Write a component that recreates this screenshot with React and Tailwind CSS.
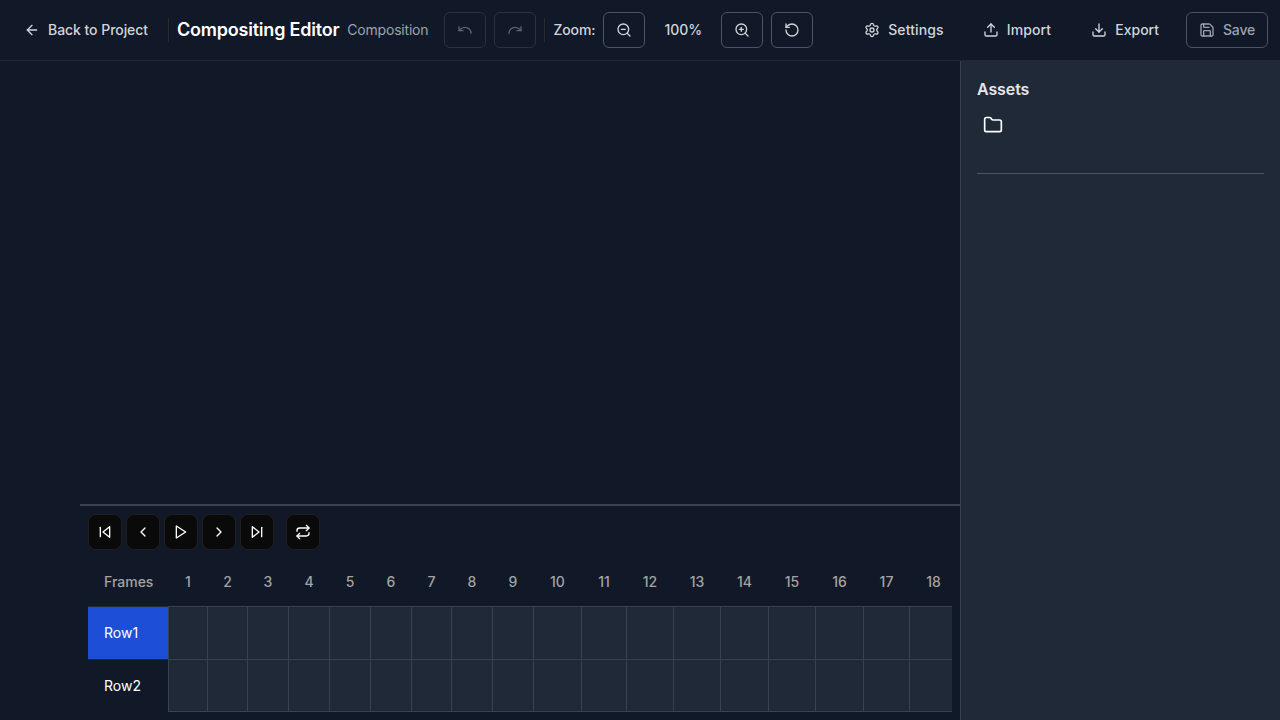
import {
  ArrowLeft,
  Undo,
  Redo,
  ZoomOut,
  ZoomIn,
  RotateCcw,
  Settings,
  Upload,
  Download,
  Save,
  Folder,
  ChevronLeft,
  ChevronRight,
  Repeat,
} from 'lucide-react';

const frames = [1, 2, 3, 4, 5, 6, 7, 8, 9, 10, 11, 12, 13, 14, 15, 16, 17, 18];
const rowClass =
  'grid grid-cols-[80px_39px_40px_41px_41px_41px_41px_40px_41px_41px_48px_45px_47px_47px_48px_47px_48px_46px_43px]';

function SkipBackIcon() {
  return (
    <svg width="16" height="16" viewBox="0 0 24 24" fill="none" stroke="currentColor" strokeWidth="2" strokeLinecap="round" strokeLinejoin="round">
      <polygon points="19 20 9 12 19 4 19 20" />
      <line x1="5" y1="19" x2="5" y2="5" />
    </svg>
  );
}

function SkipForwardIcon() {
  return (
    <svg width="16" height="16" viewBox="0 0 24 24" fill="none" stroke="currentColor" strokeWidth="2" strokeLinecap="round" strokeLinejoin="round">
      <polygon points="5 4 15 12 5 20 5 4" />
      <line x1="19" y1="5" x2="19" y2="19" />
    </svg>
  );
}

function PlayIcon() {
  return (
    <svg width="16" height="16" viewBox="0 0 24 24" fill="none" stroke="currentColor" strokeWidth="2" strokeLinecap="round" strokeLinejoin="round">
      <polygon points="5 3 19 12 5 21 5 3" />
    </svg>
  );
}

function IconButton({ icon: Icon, disabled }) {
  return (
    <button
      className={`flex h-9 w-[42px] items-center justify-center rounded-md border ${
        disabled ? 'border-[#293241] text-[#5b6270]' : 'border-[#4b5563] text-[#d1d5db]'
      }`}
    >
      <Icon size={16} />
    </button>
  );
}

function GhostButton({ icon: Icon, label }) {
  return (
    <button className="flex h-9 items-center gap-2 rounded-md px-4 text-sm font-medium text-[#d1d5db]">
      <Icon size={16} />
      {label}
    </button>
  );
}

function TransportButton({ children }) {
  return (
    <button className="flex h-9 w-[34px] items-center justify-center rounded-lg border border-[#1f1f22] bg-[#0a0a0a] text-white">
      {children}
    </button>
  );
}

function TrackRow({ label, active, last }) {
  return (
    <div className={rowClass}>
      <div
        className={`flex h-[53px] items-center border-t border-[#1f2937] px-4 text-sm text-white ${
          active ? 'bg-[#1d4ed8]' : ''
        }`}
      >
        {label}
      </div>
      {frames.map((f) => (
        <div
          key={f}
          className={`border-t border-l border-[#374151] bg-[#1f2937] ${last ? 'border-b' : ''}`}
        />
      ))}
    </div>
  );
}

export default function App() {
  return (
    <div className="flex h-screen w-full flex-col overflow-hidden bg-[#111827] font-['Inter',sans-serif] antialiased">
      <header className="flex h-[61px] shrink-0 items-center justify-between border-b border-[#1f2937] pl-2 pr-3">
        <div className="flex items-center">
          <button className="flex h-9 items-center gap-2 rounded-md px-4 text-sm font-medium tracking-[-0.05px] text-[#d1d5db]">
            <ArrowLeft size={16} />
            Back to Project
          </button>
          <div className="ml-1 h-6 w-px bg-[#2a2a2a]" />
          <h1 className="ml-2 text-lg font-semibold tracking-[-0.22px] text-white">Compositing Editor</h1>
          <span className="ml-2 text-sm tracking-[-0.2px] text-[#9ca3af]">Composition</span>
          <div className="ml-4 flex items-center gap-2">
            <IconButton icon={Undo} disabled />
            <IconButton icon={Redo} disabled />
          </div>
          <div className="ml-2 h-6 w-px bg-[#2a2a2a]" />
          <span className="ml-2 w-[42px] text-sm font-medium tracking-[-0.1px] text-[#d1d5db]">Zoom:</span>
          <div className="ml-2 flex items-center gap-2">
            <IconButton icon={ZoomOut} />
            <span className="w-[60px] text-center text-sm font-medium text-[#d1d5db]">100%</span>
            <IconButton icon={ZoomIn} />
            <IconButton icon={RotateCcw} />
          </div>
        </div>
        <div className="flex items-center">
          <div className="tracking-[0.12px]">
            <GhostButton icon={Settings} label="Settings" />
          </div>
          <div className="ml-[7px] tracking-[0.12px]">
            <GhostButton icon={Upload} label="Import" />
          </div>
          <div className="ml-2">
            <GhostButton icon={Download} label="Export" />
          </div>
          <button className="ml-[11px] flex h-9 items-center gap-2 rounded-md border border-[#4b5563] px-3 text-sm font-medium tracking-[-0.2px] text-[#9ca3af]">
            <Save size={16} />
            Save
          </button>
        </div>
      </header>

      <div className="flex min-h-0 flex-1">
        <main className="flex min-w-0 flex-1 flex-col">
          <div className="flex-1" />
          <section className="ml-20 h-[216px] shrink-0 border-t-2 border-[#374151] px-2 pt-2">
            <div className="flex items-center gap-1">
              <TransportButton>
                <SkipBackIcon />
              </TransportButton>
              <TransportButton>
                <ChevronLeft size={16} />
              </TransportButton>
              <TransportButton>
                <PlayIcon />
              </TransportButton>
              <TransportButton>
                <ChevronRight size={16} />
              </TransportButton>
              <TransportButton>
                <SkipForwardIcon />
              </TransportButton>
              <div className="ml-2">
                <TransportButton>
                  <Repeat size={16} />
                </TransportButton>
              </div>
            </div>
            <div className="mt-2">
              <div className={`${rowClass} h-12 items-center text-sm font-medium text-[#a3a3a3]`}>
                <div className="px-4">Frames</div>
                {frames.map((f) => (
                  <div key={f} className={`text-center ${f === 18 ? 'pl-1.5' : 'pl-px'}`}>
                    {f}
                  </div>
                ))}
              </div>
              <TrackRow label="Row1" active />
              <TrackRow label="Row2" last />
            </div>
          </section>
        </main>

        <aside className="w-80 shrink-0 border-l border-[#374151] bg-[#1f2937] px-4 pt-4">
          <h2 className="text-base font-semibold tracking-[-0.1px] text-[#e5e7eb]">Assets</h2>
          <div className="flex h-[73px] items-start border-b border-[#4b5563] pl-1.5 pt-3.5 text-white">
            <Folder size={20} />
          </div>
        </aside>
      </div>
    </div>
  );
}
